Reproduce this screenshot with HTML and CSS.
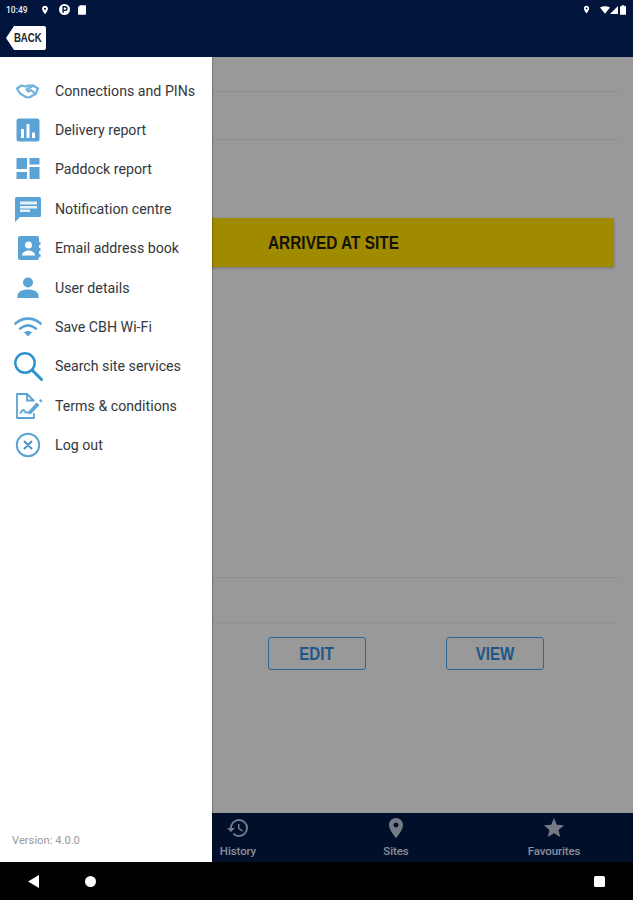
FILE: index.html
```html
<!DOCTYPE html>
<html lang="en">
<head>
<meta charset="utf-8">
<title>CBH menu</title>
<link rel="stylesheet" href="styles.css">
</head>
<body>
<div class="screen">
  <header class="topbar">
    <div class="status">
      <div class="status-left">
        <span class="clock">10:49</span>
        <svg class="st-pin" viewBox="0 0 24 24"><path d="M12 2C8.130 2 5 5.130 5 9c0 5.250 7 13 7 13s7-7.750 7-13c0-3.870-3.130-7-7-7zm0 9.500a2.500 2.500 0 0 1 0-5 2.500 2.500 0 0 1 0 5z"/></svg>
        <svg class="st-p" viewBox="0 0 12 12"><circle cx="6" cy="6" r="6" fill="#fff"/><path d="M4.500 9.500V3h2.200a2 2 0 0 1 0 4H4.500" fill="none" stroke="#00143c" stroke-width="1.500"/></svg>
        <svg class="st-sd" viewBox="0 0 10 12"><path d="M2.500 0H9a1 1 0 0 1 1 1v10a1 1 0 0 1-1 1H1a1 1 0 0 1-1-1V2.500z"/></svg>
      </div>
      <div class="status-right">
        <svg class="st-pin2" viewBox="0 0 24 24"><path d="M12 2C8.130 2 5 5.130 5 9c0 5.250 7 13 7 13s7-7.750 7-13c0-3.870-3.130-7-7-7zm0 9.500a2.500 2.500 0 0 1 0-5 2.500 2.500 0 0 1 0 5z"/></svg>
        <svg class="st-wifi" viewBox="0 0 12 9"><path d="M0 1.500Q6-1.500 12 1.500L6 9z"/></svg>
        <svg class="st-cell" viewBox="0 0 9 9"><path d="M9 0v9H0z"/></svg>
        <svg class="st-batt" viewBox="0 0 7 11"><path d="M2 0h3v1h1.500a.5.5 0 0 1 .5.500V11H0V1.500A.5.5 0 0 1 .5 1H2z"/></svg>
      </div>
    </div>
    <div class="toolbar"><a class="back"><span class="back-text">BACK</span></a></div>
  </header>

  <div class="body">
    <main class="content">
      <div class="rule rule-a"></div>
      <div class="rule rule-b"></div>
      <div class="banner"><span class="banner-text">ARRIVED AT SITE</span></div>
      <div class="spacer"></div>
      <div class="rule rule-c"></div>
      <div class="rule rule-d"></div>
      <div class="actions">
        <button class="btn"><span class="btn-text">EDIT</span></button>
        <button class="btn"><span class="btn-text">VIEW</span></button>
      </div>
    </main>

    <nav class="tabs">
      <div class="tab"></div>
      <div class="tab">
        <svg viewBox="0 0 24 24"><path d="M13 3a9 9 0 0 0-9 9H1l3.890 3.890.07.14L9 12H6c0-3.870 3.130-7 7-7s7 3.130 7 7-3.130 7-7 7c-1.930 0-3.680-.79-4.940-2.060l-1.420 1.420A8.954 8.954 0 0 0 13 21a9 9 0 0 0 0-18zm-1 5v5l4.280 2.540.72-1.210-3.500-2.080V8H12z"/></svg>
        <span>History</span>
      </div>
      <div class="tab">
        <svg viewBox="0 0 24 24"><path d="M12 2C8.130 2 5 5.130 5 9c0 5.250 7 13 7 13s7-7.750 7-13c0-3.870-3.130-7-7-7zm0 9.500a2.500 2.500 0 0 1 0-5 2.500 2.500 0 0 1 0 5z"/></svg>
        <span>Sites</span>
      </div>
      <div class="tab">
        <svg viewBox="0 0 24 24"><path d="M12 17.270L18.180 21l-1.640-7.030L22 9.240l-7.190-.61L12 2 9.190 8.630 2 9.240l5.460 4.730L5.820 21z"/></svg>
        <span>Favourites</span>
      </div>
    </nav>

    <aside class="drawer">
      <ul class="menu">
        <li class="item">
          <svg class="ico" viewBox="0 0 30 30"><g fill="none" stroke="#6fb1dc" stroke-width="2.200" stroke-linejoin="round" stroke-linecap="round"><path d="M4 12.500l4.500-3 4.500 1 2-1h5l5 3-2.500 5.500L16 21.500l-3-.5-6-3.500z"/><path d="M19.500 10l-6 3.500 2 2 2.500-1.500 4.500 4"/></g></svg>
          <span>Connections and PINs</span>
        </li>
        <li class="item">
          <svg class="ico" viewBox="0 0 30 30"><rect x="3.500" y="3.500" width="23" height="23" rx="2.500" fill="#5ba3d6"/><path d="M8 14h3v9H8zM13.500 9h3v14h-3zM19 17.500h3V23h-3z" fill="#fff"/></svg>
          <span>Delivery report</span>
        </li>
        <li class="item">
          <svg class="ico" viewBox="0 0 30 30"><path d="M3.500 4h10.500v11H3.500zM3.500 18h10.500v7H3.500zM16.500 4H26.500v6.500H16.500zM16.500 13h10v12h-10z" fill="#5ba3d6"/></svg>
          <span>Paddock report</span>
        </li>
        <li class="item">
          <svg class="ico" viewBox="0 0 30 30"><path d="M4.500 3h22a1.500 1.500 0 0 1 1.500 1.500v17a1.500 1.500 0 0 1-1.500 1.500H7l-5 5V4.500A1.500 1.500 0 0 1 3.500 3z" fill="#5ba3d6"/><path d="M7 7.500h17v3H7zM7 12h17v2.500H7zM7 15.500h10V18H7z" fill="#e6f1f9"/></svg>
          <span>Notification centre</span>
        </li>
        <li class="item">
          <svg class="ico" viewBox="0 0 30 30"><path d="M7 3h17a2 2 0 0 1 2 2v4h1.500v3H26v3h1.500v3H26v3h1.500v3H26v1a2 2 0 0 1-2 2H7a2 2 0 0 1-2-2V5a2 2 0 0 1 2-2z" fill="#5ba3d6"/><circle cx="15.500" cy="12" r="3.500" fill="#fff"/><path d="M9 22.500c0-3.500 4-5 6.500-5s6.500 1.500 6.500 5z" fill="#fff"/></svg>
          <span>Email address book</span>
        </li>
        <li class="item">
          <svg class="ico" viewBox="0 0 30 30"><circle cx="15" cy="9.500" r="5" fill="#5ba3d6"/><path d="M4.500 25v-2.500C4.500 18 11 16.500 15 16.500S25.500 18 25.500 22.500V25z" fill="#5ba3d6"/></svg>
          <span>User details</span>
        </li>
        <li class="item">
          <svg class="ico" viewBox="0 0 30 30"><g fill="none" stroke="#5ba3d6" stroke-width="2.600" stroke-linecap="round"><path d="M2.500 11.500c7-6.500 18-6.500 25 0"/><path d="M7 16.500c5-4 11-4 16 0"/></g><path d="M11 20.500c2.300-2 5.700-2 8 0l-4 4z" fill="#5ba3d6"/></svg>
          <span>Save CBH Wi-Fi</span>
        </li>
        <li class="item">
          <svg class="ico ico-lg" viewBox="0 0 30 30"><circle cx="12" cy="12" r="9.700" fill="none" stroke="#2a93cc" stroke-width="2.400"/><path d="M19 19l9.500 9.500" stroke="#2a93cc" stroke-width="3" stroke-linecap="round"/></svg>
          <span>Search site services</span>
        </li>
        <li class="item">
          <svg class="ico" viewBox="0 0 30 30"><g fill="none" stroke="#5ba3d6" stroke-width="1.800" stroke-linejoin="round" stroke-linecap="round"><path d="M21 23v4H4V3h10l6.500 6.500"/><path d="M14 3v6.500h6.500"/><path d="M7.500 22c2-3 3-4 4-2s2 2 3.500 1"/></g><path d="M16 20l7.500-8.500 3 2.500-8 8.500-3.500 1zM26 9.500l1.500-1.500 2 2-1.500 1.500z" fill="#5ba3d6"/></svg>
          <span>Terms &amp; conditions</span>
        </li>
        <li class="item">
          <svg class="ico" viewBox="0 0 30 30"><circle cx="15" cy="15" r="11.200" fill="none" stroke="#5ba3d6" stroke-width="2"/><path d="M11.500 11.500l7 7M18.500 11.500l-7 7" stroke="#4a94c9" stroke-width="2" stroke-linecap="round"/></svg>
          <span>Log out</span>
        </li>
      </ul>
      <div class="version">Version: 4.0.0</div>
    </aside>
  </div>

  <footer class="sysnav">
    <svg class="nav-back" viewBox="0 0 11 13"><path d="M11 0v13L0 6.500z"/></svg>
    <span class="nav-home"></span>
    <span class="nav-recent"></span>
  </footer>
</div>
</body>
</html>
```
FILE: styles.css
```css
* { box-sizing: border-box; }
html, body { margin: 0; padding: 0; }
body { font-family: Roboto, "Liberation Sans", sans-serif; background: #000; }

.screen { width: 633px; height: 900px; display: flex; flex-direction: column; overflow: hidden; }

.topbar { height: 57px; background: #00143c; flex: none; display: flex; flex-direction: column; }
.status { height: 19px; padding: 0 7px 0 6px; display: flex; justify-content: space-between; align-items: center; }
.status-left, .status-right { display: flex; align-items: center; fill: #fff; }
.clock { color: #eef0f4; font-size: 8.500px; font-weight: 500; width: 34px; }
.st-pin { width: 10px; height: 10px; margin-right: 9px; }
.st-p { width: 11px; height: 11px; margin-right: 8px; }
.st-sd { width: 8px; height: 10px; }
.st-pin2 { width: 9px; height: 9px; margin-right: 9px; }
.st-wifi { width: 10px; height: 8px; }
.st-cell { width: 8px; height: 8px; margin-right: 2px; }
.st-batt { width: 6px; height: 10px; }

.toolbar { flex: 1; padding: 7px 0 0 6px; }
.back {
  display: flex; align-items: center; justify-content: flex-end;
  width: 40px; height: 24px; padding-right: 4px;
  background: #fff; color: #1c2530;
  clip-path: polygon(8px 0, 100% 0, 100% 100%, 8px 100%, 0 50%);
  border-radius: 2px;
}
.back-text {
  display: inline-block; font-family: "Liberation Sans", sans-serif;
  font-size: 12px; font-weight: 700;
  transform: scaleX(0.8); transform-origin: right center;
}

.body { flex: 1; position: relative; display: flex; flex-direction: column; background: #999; }

.content { flex: 1; display: flex; flex-direction: column; padding-top: 34px; }
.rule { height: 1px; margin-right: 13px; background: #8f8f8f; flex: none; }
.rule-b { margin-top: 47px; }
.rule-d { margin-top: 45px; background: #939393; }
.banner {
  flex: none; height: 49px; margin: 78px 19px 0 0; padding-left: 268px;
  display: flex; align-items: center;
  background: #a08a00; border-radius: 2px;
  box-shadow: 0 1px 3px rgba(0, 0, 0, 0.25);
}
.banner-text {
  display: inline-block; margin-top: 2px;
  font-family: "Liberation Sans", sans-serif;
  font-weight: 700; font-size: 17.500px; color: #14130a; white-space: nowrap;
  transform: scaleX(0.88); transform-origin: left center;
}
.spacer { height: 310px; flex: none; }
.actions { display: flex; gap: 80px; padding: 13px 0 0 268px; }
.btn {
  width: 98px; height: 33px; padding: 2px 0 0;
  background: transparent; border: 1.500px solid #2e6797; border-radius: 3px;
  color: #1d5688; font-family: "Liberation Sans", sans-serif;
  font-size: 18px; font-weight: 700;
}
.btn-text { display: inline-block; transform: scaleX(0.84); }

.tabs { height: 49px; flex: none; display: grid; grid-template-columns: repeat(4, 158px); padding-left: 1px; background: #020f2a; }
.tab { display: flex; flex-direction: column; align-items: center; padding-top: 3px; fill: #747b85; color: #8a919a; }
.tab svg { width: 24px; height: 24px; }
.tab span { font-size: 11.500px; font-weight: 500; line-height: 15px; margin-top: 3.500px; letter-spacing: -0.100px; }

.drawer {
  position: absolute; left: 0; top: 0; bottom: 0; width: 212px;
  background: #fff; box-shadow: 1px 0 1px rgba(0, 0, 0, 0.2);
  display: flex; flex-direction: column; justify-content: space-between;
}
.menu { list-style: none; margin: 0; padding: 14px 0 0; }
.item { height: 39.400px; display: flex; align-items: center; color: #33383d; font-size: 14.200px; padding-left: 13px; white-space: nowrap; }
.ico { width: 30px; height: 30px; flex: none; margin-right: 12px; }
.ico-lg { overflow: visible; }
.version { font-size: 11.200px; color: #999; padding: 0 0 15px 12px; }

.sysnav { height: 38px; flex: none; background: #000; display: flex; align-items: center; padding: 0 28px; }
.nav-back { width: 11px; height: 13px; fill: #fff; }
.nav-home { width: 11px; height: 11px; border-radius: 50%; background: #fff; margin-left: 46px; }
.nav-recent { width: 11px; height: 11px; border-radius: 1.500px; background: #fff; margin-left: auto; }
```
